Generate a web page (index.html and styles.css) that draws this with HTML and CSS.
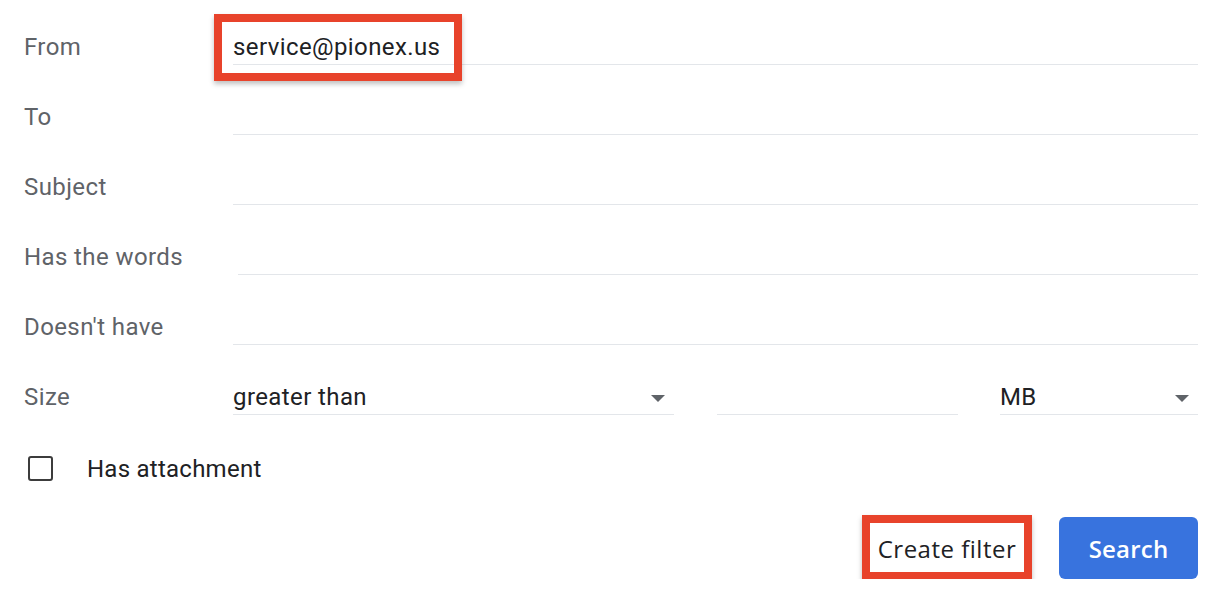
FILE: index.html
```html
<!DOCTYPE html>
<html>
<head>
<meta charset="utf-8">
<link rel="stylesheet" href="styles.css">
</head>
<body>
<div class="form">
  <div class="row">
    <div class="lbl">From</div>
    <div class="field"><span class="val">service@pionex.us</span><span class="annot annot-from"></span></div>
  </div>
  <div class="row">
    <div class="lbl">To</div>
    <div class="field"></div>
  </div>
  <div class="row">
    <div class="lbl">Subject</div>
    <div class="field"></div>
  </div>
  <div class="row">
    <div class="lbl">Has the words</div>
    <div class="field shifted"></div>
  </div>
  <div class="row">
    <div class="lbl">Doesn't have</div>
    <div class="field"></div>
  </div>
  <div class="row">
    <div class="lbl">Size</div>
    <div class="size-fields">
      <div class="field select"><span class="val">greater than</span><span class="caret"></span></div>
      <div class="field"></div>
      <div class="field select"><span class="val">MB</span><span class="caret"></span></div>
    </div>
  </div>
  <div class="check-row">
    <span class="box"></span>
    <span class="check-label">Has attachment</span>
  </div>
  <div class="actions">
    <div class="btn-wrap">
      <button class="btn-text">Create filter</button>
      <span class="annot annot-create"></span>
    </div>
    <button class="btn-primary">Search</button>
  </div>
</div>
</body>
</html>
```

FILE: styles.css
```css
* { box-sizing: border-box; }
html, body { margin: 0; padding: 0; background: #fff; }
body { font-family: Roboto, "Liberation Sans", sans-serif; }

.form {
  padding: 0 26px 0 24px;
  width: 1224px;
}

.row {
  display: grid;
  grid-template-columns: 209px 1fr;
  height: 70px;
}

.lbl {
  font-size: 24px;
  letter-spacing: 0.4px;
  color: #5f6368;
  padding-top: 33px;
  line-height: 28px;
}

.field {
  position: relative;
  margin-top: 29px;
  height: 36px;
  border-bottom: 1px solid #e3e6ea;
  font-size: 24px;
  letter-spacing: 0.4px;
  color: #202124;
  line-height: 28px;
  padding-top: 4px;
}

.field.shifted { margin-left: 5px; }

.size-fields {
  display: grid;
  grid-template-columns: 441px 241px 1fr;
  column-gap: 43px;
}
.size-fields > .field:last-child { margin-left: -1px; }

.select { display: flex; justify-content: space-between; }
.caret {
  width: 0; height: 0;
  margin-top: 12px;
  margin-right: 9px;
  border-left: 7px solid transparent;
  border-right: 7px solid transparent;
  border-top: 7px solid #5f6368;
}

.annot {
  position: absolute;
  border: 8px solid #e8432b;
  box-shadow: 0 3px 5px rgba(0,0,0,0.25);
  pointer-events: none;
}
.annot-from {
  left: -19px;
  top: -15px;
  width: 248px;
  height: 67px;
}

.check-row {
  display: flex;
  align-items: center;
  height: 70px;
  padding-top: 27px;
  padding-left: 4px;
}
.box {
  width: 25px;
  height: 25px;
  border: 2.5px solid #3c3c3c;
  border-radius: 3px;
  flex: none;
}
.check-label {
  margin-left: 34px;
  font-size: 24px;
  letter-spacing: 0.25px;
  color: #202124;
  line-height: 28px;
}

.actions {
  display: flex;
  justify-content: flex-end;
  align-items: center;
  gap: 35px;
  padding-top: 27px;
}
.btn-wrap { position: relative; }
.btn-text {
  display: block;
  width: 154px;
  height: 62px;
  border: none;
  background: transparent;
  font-family: "Open Sans", Roboto, sans-serif;
  font-size: 24px;
  color: #202124;
  padding: 0;
  letter-spacing: 0.5px;
}
.annot-create {
  left: -8px;
  right: -8px;
  top: -2px;
  bottom: -1px;
}
.btn-primary {
  width: 139px;
  height: 62px;
  border: none;
  border-radius: 6px;
  background: #3873de;
  color: #fff;
  font-family: "Open Sans", Roboto, sans-serif;
  font-weight: 600;
  font-size: 24px;
  padding: 0;
  letter-spacing: 0.2px;
}
```
